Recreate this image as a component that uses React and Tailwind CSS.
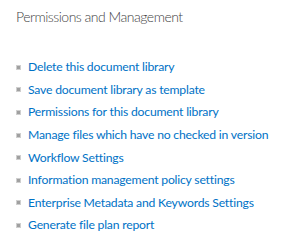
export default function App() {
  const items = [
    "Delete this document library",
    "Save document library as template",
    "Permissions for this document library",
    "Manage files which have no checked in version",
    "Workflow Settings",
    "Information management policy settings",
    "Enterprise Metadata and Keywords Settings",
    "Generate file plan report",
  ];
  return (
    <div className="w-[284px] h-[250px] bg-white pl-[16px] pt-[9px] whitespace-nowrap" style={{ fontFamily: 'Lato, sans-serif' }}>
      <div className="text-[14px] leading-[16px] tracking-[-0.5px] text-[#444444] font-light">Permissions and Management</div>
      <ul className="mt-[31px] flex flex-col">
        {items.map((t) => (
          <li key={t} className="flex items-center h-[22.6px]">
            <span className="w-[5px] h-[5px] bg-[#a0a0a0] border border-[#cfcfcf] mr-[7px] shrink-0" />
            <a className="text-[12.2px] leading-[16px] tracking-[-0.2px] text-[#0072c6]">{t}</a>
          </li>
        ))}
      </ul>
    </div>
  );
}
